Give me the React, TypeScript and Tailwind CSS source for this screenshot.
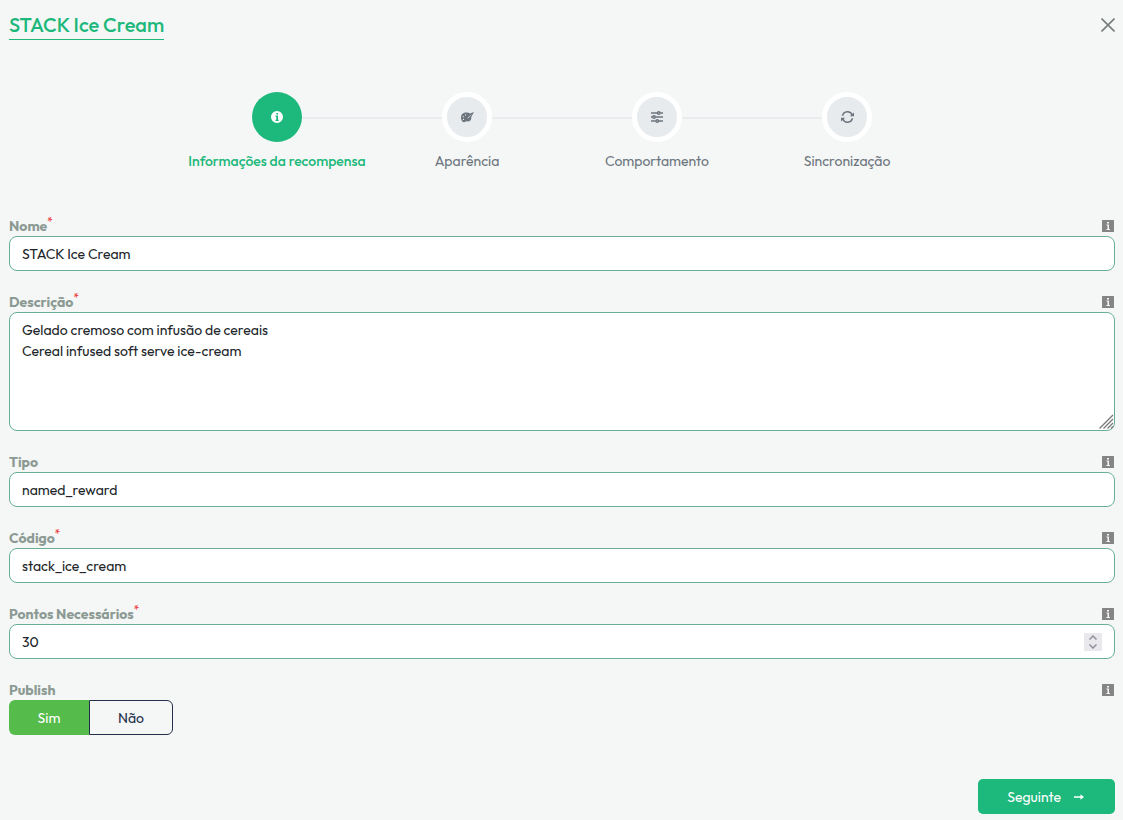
import { useState, type ReactNode } from "react";

type IconProps = { className?: string };

function InfoCircleIcon({ className }: IconProps) {
  return (
    <svg viewBox="0 0 24 24" className={className} fill="currentColor" aria-hidden="true">
      <path
        fillRule="evenodd"
        d="M12 0a12 12 0 1 0 0 24a12 12 0 0 0 0-24ZM10.500 4h3.500v3h-3.500ZM9 9h5v8.500h1.500V20H9v-2.500h1.500v-6H9Z"
      />
    </svg>
  );
}

function PaletteIcon({ className }: IconProps) {
  return (
    <svg viewBox="0 0 26 24" className={className} fill="currentColor" aria-hidden="true">
      <path
        fillRule="evenodd"
        d="M10 3C4 3 0 7.500 0 13c0 5.500 3 9.500 6.500 9.500c2.500 0 2.500-2 4.500-2s3 1 5.500 0c3-1.200 4.500-4.500 4-8.500L26 2l-8 3C16 3.500 12.500 3 10 3ZM9 6.500a1.300 1.300 0 1 1 0 2.600a1.300 1.300 0 0 1 0-2.600ZM4.500 10a1.300 1.300 0 1 1 0 2.600a1.300 1.300 0 0 1 0-2.600ZM5 15.500a1.300 1.300 0 1 1 0 2.600a1.300 1.300 0 0 1 0-2.600ZM20.500 7l.5.5l-6.500 7l-1.500.5l.5-1.500Z"
      />
    </svg>
  );
}

function SlidersIcon({ className }: IconProps) {
  return (
    <svg viewBox="0 0 24 24" className={className} fill="none" stroke="currentColor" strokeWidth="3" aria-hidden="true">
      <path d="M0 4h12.500M18.500 4H24M0 12h3M9 12h15M0 20h9.500M15.500 20H24" />
      <circle cx="15.500" cy="4" r="2.500" />
      <circle cx="6" cy="12" r="2.500" />
      <circle cx="12.500" cy="20" r="2.500" />
    </svg>
  );
}

function SyncIcon({ className }: IconProps) {
  return (
    <svg viewBox="0 0 26 24" className={className} fill="none" stroke="currentColor" strokeWidth="3" aria-hidden="true">
      <path d="M3 9.500A10.300 10.300 0 0 1 22.500 8M23 14.500A10.300 10.300 0 0 1 3.500 16" />
      <path d="M17.500 10.500H26V3ZM8.500 13.500H0V21Z" fill="currentColor" stroke="none" />
    </svg>
  );
}

function InfoSquareIcon({ className }: IconProps) {
  return (
    <svg viewBox="0 0 12 12" className={className} aria-hidden="true">
      <rect width="12" height="12" rx="0.500" fill="#858585" />
      <path d="M5 2h2v1.500H5ZM4.500 4.500H7V9h1v1H4.500V9h1V5.500h-1Z" fill="#f5f7f6" />
    </svg>
  );
}

function Step({ icon, label, active, first }: { icon: ReactNode; label: string; active?: boolean; first?: boolean }) {
  return (
    <li className="relative flex w-[190px] flex-col items-center" aria-current={active ? "step" : undefined}>
      {!first && <span className="absolute top-[25px] right-[120px] h-[2px] w-[140px] bg-[#e9ebef]" />}
      <span
        className={
          active
            ? "flex size-[50px] items-center justify-center rounded-full bg-[#1db87b] text-white"
            : "flex size-[50px] items-center justify-center rounded-full border-5 border-white bg-[#e8ebee] text-[#6c757d]"
        }
      >
        {icon}
      </span>
      <span
        className={
          active
            ? "mt-[9px] text-sm leading-[21px] font-medium whitespace-nowrap text-[#1db87b]"
            : "mt-[9px] text-sm leading-[21px] whitespace-nowrap text-[#6c757d]"
        }
      >
        {label}
      </span>
    </li>
  );
}

function Field({ id, label, required, children }: { id: string; label: string; required?: boolean; children: ReactNode }) {
  return (
    <div>
      <div className="flex h-[19px] items-start justify-between pr-px">
        <label htmlFor={id} className="flex leading-[19px] font-bold text-[#8c9a94]">
          {label}
          {required && <span className="-mt-[3px] text-[11px] leading-4 font-medium text-[#f0474c]">*</span>}
        </label>
        <button type="button" aria-label={"Ajuda: " + label} className="mt-[3px]">
          <InfoSquareIcon className="size-3" />
        </button>
      </div>
      {children}
    </div>
  );
}

const control = "block h-[35px] w-full rounded-lg border border-[#67b096] bg-white px-3 text-[#212529] outline-none";

export default function App() {
  const [name, setName] = useState("STACK Ice Cream");
  const [description, setDescription] = useState(
    "Gelado cremoso com infusão de cereais\nCereal infused soft serve ice-cream"
  );
  const [kind, setKind] = useState("named_reward");
  const [code, setCode] = useState("stack_ice_cream");
  const [points, setPoints] = useState(30);
  const [publish, setPublish] = useState(true);

  return (
    <main className="min-h-screen bg-[#f5f7f6] px-2 pt-[11px] pb-[6px] font-[Outfit,Lato,sans-serif] text-sm text-[#212529]">
      <div className="pl-px">
        <header className="flex items-start justify-between">
          <h1 className="border-b border-[#1db87b] text-xl leading-7 font-medium text-[#1db87b]">STACK Ice Cream</h1>
          <button type="button" aria-label="Fechar" className="mt-[7px] text-[#777c7c]">
            <svg viewBox="0 0 14 14" className="size-[14px]" fill="none" stroke="currentColor" strokeWidth="1.600">
              <path d="M.5.5l13 13M13.500.5l-13 13" />
            </svg>
          </button>
        </header>

        <ol className="mt-[52px] flex justify-center">
          <Step first active label="Informações da recompensa" icon={<InfoCircleIcon className="size-3" />} />
          <Step label="Aparência" icon={<PaletteIcon className="h-3 w-[13px]" />} />
          <Step label="Comportamento" icon={<SlidersIcon className="size-3" />} />
          <Step label="Sincronização" icon={<SyncIcon className="h-3 w-[13px]" />} />
        </ol>

        <form className="mt-[45px] flex flex-col gap-[22px]" onSubmit={(e) => e.preventDefault()}>
          <Field id="name" label="Nome" required>
            <input id="name" className={control} value={name} onChange={(e) => setName(e.target.value)} />
          </Field>

          <Field id="description" label="Descrição" required>
            <div className="relative">
              <textarea
                id="description"
                className="block h-[119px] w-full resize-none rounded-lg border border-[#67b096] bg-white px-3 py-[7px] leading-[21px] text-[#212529] outline-none"
                value={description}
                onChange={(e) => setDescription(e.target.value)}
              />
              <svg
                viewBox="0 0 15 15"
                className="pointer-events-none absolute right-px bottom-[2px] size-[15px]"
                fill="none"
                stroke="#777"
                strokeWidth="1.300"
                aria-hidden="true"
              >
                <path d="M.5 14.500l13.500-13.500M4.500 14.500l9.500-9.500M8.500 14.500l5.500-5.500M12 14.500l2-2" />
              </svg>
            </div>
          </Field>

          <Field id="kind" label="Tipo">
            <input id="kind" className={control} value={kind} onChange={(e) => setKind(e.target.value)} />
          </Field>

          <Field id="code" label="Código" required>
            <input id="code" className={control} value={code} onChange={(e) => setCode(e.target.value)} />
          </Field>

          <Field id="points" label="Pontos Necessários" required>
            <div className="relative">
              <input
                id="points"
                type="number"
                className="block h-[35px] w-full [appearance:textfield] rounded-lg border border-[#67b096] bg-white px-3 text-[#212529] outline-none [&::-webkit-inner-spin-button]:appearance-none"
                value={points}
                onChange={(e) => setPoints(Number(e.target.value))}
              />
              <div className="absolute top-[9px] right-[13px] flex size-[18px] flex-col bg-[#e9e9ed] text-[#8f8f9d]">
                <button type="button" aria-label="Aumentar" className="flex flex-1 items-end justify-center pb-[2px]" onClick={() => setPoints(points + 1)}>
                  <svg viewBox="0 0 8 5" className="h-[5px] w-2" fill="none" stroke="currentColor" strokeWidth="1.500">
                    <path d="M.5 4.500L4 1l3.500 3.500" />
                  </svg>
                </button>
                <button type="button" aria-label="Diminuir" className="flex flex-1 items-start justify-center pt-[2px]" onClick={() => setPoints(points - 1)}>
                  <svg viewBox="0 0 8 5" className="h-[5px] w-2" fill="none" stroke="currentColor" strokeWidth="1.500">
                    <path d="M.5.5L4 4L7.500.5" />
                  </svg>
                </button>
              </div>
            </div>
          </Field>

          <Field id="publish" label="Publish">
            <div className="flex h-[35px]">
              <button
                id="publish"
                type="button"
                aria-pressed={publish}
                onClick={() => setPublish(true)}
                className={
                  publish
                    ? "w-20 rounded-l-md bg-[#55bb4b] text-white"
                    : "w-20 rounded-l-md border border-r-0 border-[#232f4b] text-[#232f4b]"
                }
              >
                Sim
              </button>
              <button
                type="button"
                aria-pressed={!publish}
                onClick={() => setPublish(false)}
                className={
                  publish
                    ? "w-[84px] rounded-r-md border border-[#232f4b] text-[#232f4b]"
                    : "w-[84px] rounded-r-md bg-[#55bb4b] text-white"
                }
              >
                Não
              </button>
            </div>
          </Field>

          <div className="mt-[22px] flex justify-end">
            <button type="submit" className="flex h-[35px] items-center gap-[13px] rounded-[5px] bg-[#1db87b] pr-[31px] pl-[29px] text-white">
              Seguinte
              <svg viewBox="0 0 10 6" className="h-[6px] w-[10px]" fill="currentColor" aria-hidden="true">
                <path d="M0 2.300h6.500V.3L10 3L6.500 5.700V3.700H0Z" />
              </svg>
            </button>
          </div>
        </form>
      </div>
    </main>
  );
}
